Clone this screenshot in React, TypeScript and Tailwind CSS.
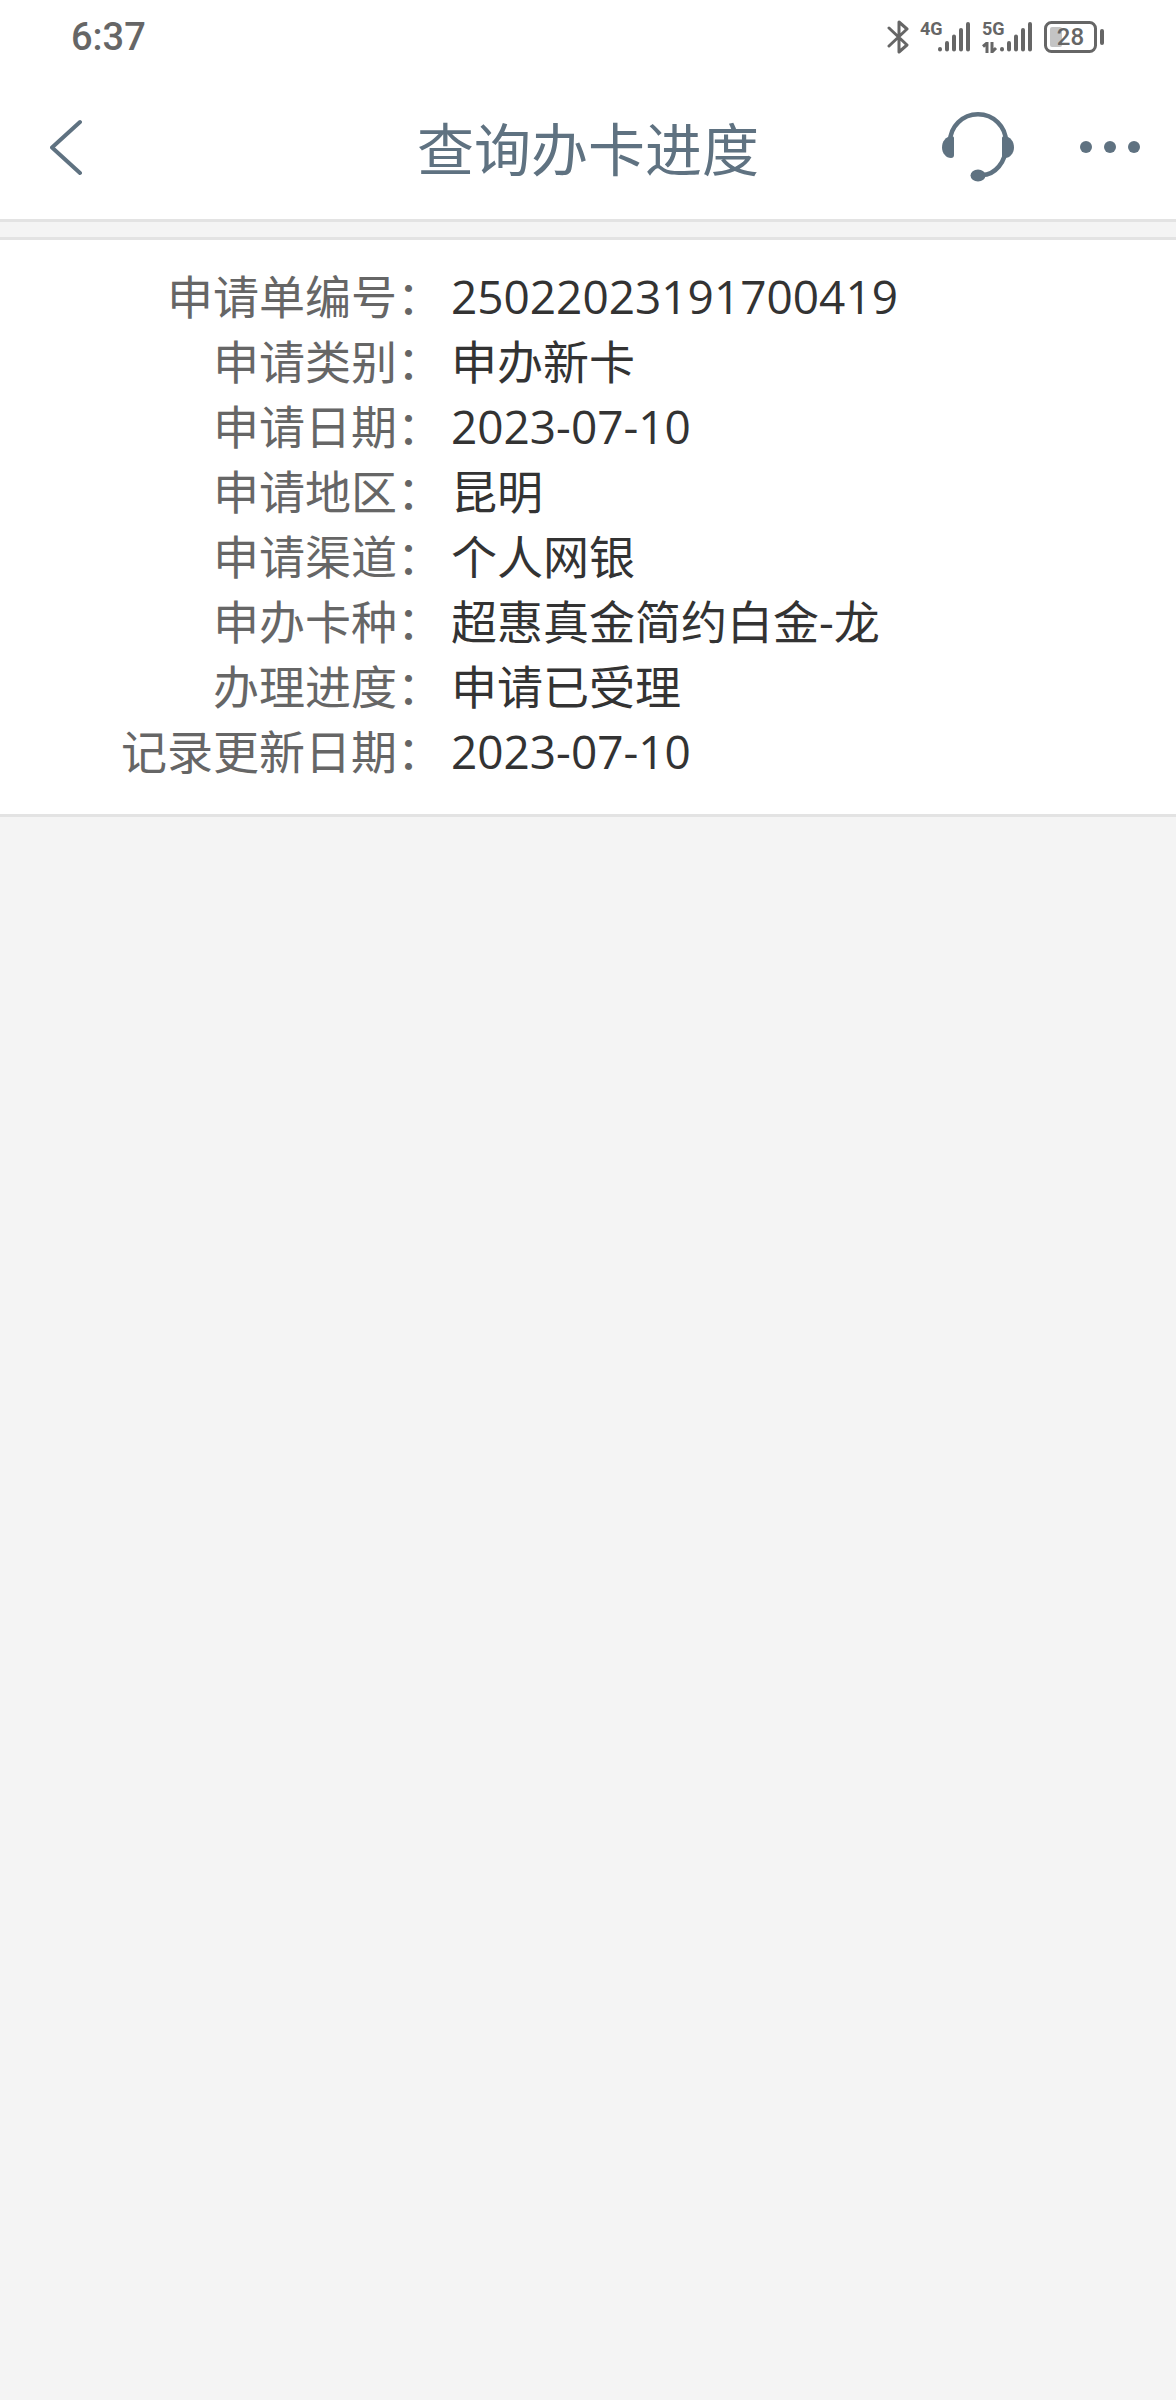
import type { ReactNode } from "react";

const details = [
  { label: "申请单编号", value: "25022023191700419" },
  { label: "申请类别", value: "申办新卡" },
  { label: "申请日期", value: "2023-07-10" },
  { label: "申请地区", value: "昆明" },
  { label: "申请渠道", value: "个人网银" },
  { label: "申办卡种", value: "超惠真金简约白金-龙" },
  { label: "办理进度", value: "申请已受理" },
  { label: "记录更新日期", value: "2023-07-10" },
];

function Signal({ network, children }: { network: string; children?: ReactNode }) {
  return (
    <div className="flex h-8 items-stretch">
      <div className="flex w-[18px] flex-col justify-between">
        <span className="font-['Liberation_Sans_Narrow','Roboto',sans-serif] text-[18px] leading-4 font-bold">
          {network}
        </span>
        {children}
      </div>
      <svg width="33" height="32" viewBox="0 0 33 32" stroke="currentColor" strokeWidth="4" strokeLinecap="round" aria-hidden="true">
        <path d="M2 28v0.6M9 22v6.6M16 15.500v13.100M23 9v19.600M30 3v25.600" />
      </svg>
    </div>
  );
}

function Battery({ level }: { level: number }) {
  return (
    <div className="relative h-8 w-[61px]">
      <svg width="61" height="32" viewBox="0 0 61 32" fill="none" aria-hidden="true">
        <rect x="6" y="6" width="12" height="20" rx="2" fill="#c4c4c4" />
        <rect x="1.500" y="1.500" width="50" height="29" rx="6" stroke="currentColor" strokeWidth="3" />
        <path d="M58 10v12" stroke="currentColor" strokeWidth="4" strokeLinecap="round" />
      </svg>
      <span className="absolute inset-y-0 left-0 w-[53px] text-center text-[24px] leading-8 font-medium">
        {level}
      </span>
    </div>
  );
}

function StatusBar() {
  return (
    <div className="flex h-[73px] items-center justify-between px-[71px] text-[#666]">
      <span className="font-['Roboto',sans-serif] text-[38px] leading-[48px] font-medium">6:37</span>
      <div className="flex items-center gap-[11px] font-['Roboto',sans-serif]">
        <svg width="22" height="34" viewBox="0 0 22 34" fill="none" stroke="currentColor" strokeWidth="3" strokeLinecap="round" strokeLinejoin="round" aria-hidden="true">
          <path d="M2 8l18 17-8 7V2l8 7L2 26" />
        </svg>
        <Signal network="4G" />
        <Signal network="5G">
          <svg width="16" height="11" viewBox="0 0 16 11" fill="none" stroke="currentColor" strokeWidth="3" aria-hidden="true">
            <path d="M1 4.500L5 1v10M10 0v10l4-4" />
          </svg>
        </Signal>
        <Battery level={28} />
      </div>
    </div>
  );
}

function Header() {
  return (
    <header className="grid h-[146px] grid-cols-[1fr_auto_1fr] items-center px-9 pt-0.5 text-[#5f7281]">
      <button type="button" aria-label="返回" className="w-[60px] pl-[14px]">
        <svg width="32" height="57" viewBox="0 0 32 57" fill="none" stroke="currentColor" strokeWidth="4" strokeLinecap="round" strokeLinejoin="round">
          <path d="M30 3L2 28.500L30 54" />
        </svg>
      </button>
      <h1 className="pt-1 text-[57px] leading-[80px] font-normal">查询办卡进度</h1>
      <div className="flex items-center justify-end gap-[66px]">
        <button type="button" aria-label="客服">
          <svg width="72" height="70" viewBox="0 0 72 70" fill="none">
            <path d="M8 30A28 27.700 0 0 1 64 30V34C64 50 53 63 40 63" stroke="currentColor" strokeWidth="4.500" />
            <path d="M12 26V43Q12 46 9 46C4 46 0 41 0 35.500C0 29 4 25 9 24Q12 24 12 26Z" fill="currentColor" />
            <path d="M60 26V43Q60 46 63 46C68 46 72 41 72 35.500C72 29 68 25 63 24Q60 24 60 26Z" fill="currentColor" />
            <ellipse cx="36" cy="63.500" rx="7.500" ry="6" fill="currentColor" />
          </svg>
        </button>
        <button type="button" aria-label="更多">
          <svg width="60" height="12" viewBox="0 0 60 12" fill="currentColor">
            <circle cx="6" cy="6" r="6" />
            <circle cx="30" cy="6" r="6" />
            <circle cx="54" cy="6" r="6" />
          </svg>
        </button>
      </div>
    </header>
  );
}

export default function App() {
  return (
    <div className="min-h-screen bg-[#f4f4f4] font-['Open_Sans','Noto_Sans_CJK_SC',sans-serif]">
      <div className="border-b-[3px] border-[#e3e3e3] bg-white">
        <StatusBar />
        <Header />
      </div>
      <main className="mt-[15px] border-y-[3px] border-[#e3e3e3] bg-white pt-6 pb-[30px]">
        <dl className="text-[46px] leading-[65px]">
          {details.map((item) => (
            <div key={item.label} className="grid grid-cols-[38%_1fr] gap-x-1">
              <dt className="pr-1 text-right text-[#666]">{item.label}：</dt>
              <dd className="text-[#333]">{item.value}</dd>
            </div>
          ))}
        </dl>
      </main>
    </div>
  );
}
